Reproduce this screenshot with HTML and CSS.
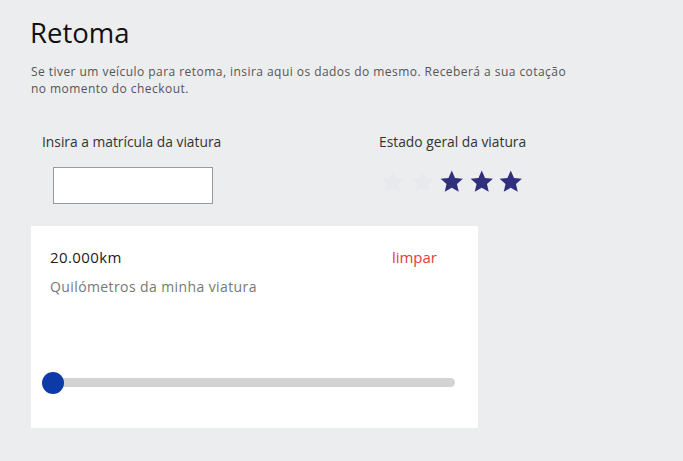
FILE: index.html
```html
<!DOCTYPE html>
<html lang="pt">
<head>
<meta charset="utf-8">
<link rel="stylesheet" href="styles.css">
</head>
<body>
<main class="page">
  <h1 class="title">Retoma</h1>
  <p class="desc">Se tiver um veículo para retoma, insira aqui os dados do mesmo. Receberá a sua cotação<br>no momento do checkout.</p>
  <div class="fields">
    <div class="field plate">
      <label class="label">Insira a matrícula da viatura</label>
      <input class="input" type="text">
    </div>
    <div class="field state">
      <span class="label">Estado geral da viatura</span>
      <div class="stars">
        <svg class="star off" viewBox="0 0 24 24"><path d="M12 1.5l3.1 6.9 7.4.7-5.6 5 1.7 7.4L12 17.6l-6.6 3.9 1.7-7.4-5.6-5 7.4-.7z"/></svg>
        <svg class="star off" viewBox="0 0 24 24"><path d="M12 1.5l3.1 6.9 7.4.7-5.6 5 1.7 7.4L12 17.6l-6.6 3.9 1.7-7.4-5.6-5 7.4-.7z"/></svg>
        <svg class="star on" viewBox="0 0 24 24"><path d="M12 1.5l3.1 6.9 7.4.7-5.6 5 1.7 7.4L12 17.6l-6.6 3.9 1.7-7.4-5.6-5 7.4-.7z"/></svg>
        <svg class="star on" viewBox="0 0 24 24"><path d="M12 1.5l3.1 6.9 7.4.7-5.6 5 1.7 7.4L12 17.6l-6.6 3.9 1.7-7.4-5.6-5 7.4-.7z"/></svg>
        <svg class="star on" viewBox="0 0 24 24"><path d="M12 1.5l3.1 6.9 7.4.7-5.6 5 1.7 7.4L12 17.6l-6.6 3.9 1.7-7.4-5.6-5 7.4-.7z"/></svg>
      </div>
    </div>
  </div>
  <section class="card">
    <div class="card-head">
      <span class="km">20.000km</span>
      <a class="clear">limpar</a>
    </div>
    <div class="sub">Quilómetros da minha viatura</div>
    <div class="slider">
      <div class="track"></div>
      <div class="thumb"></div>
    </div>
  </section>
</main>
</body>
</html>
```
FILE: styles.css
```css
* { box-sizing: border-box; }
html, body { margin: 0; padding: 0; }
body {
  background: #ecedef;
  font-family: "Open Sans", "Liberation Sans", sans-serif;
  color: #222;
  width: 683px;
  height: 461px;
  overflow: hidden;
}
.page { padding: 16px 0 0 30px; }
.title {
  margin: 0;
  font-size: 27.5px;
  font-weight: 400;
  line-height: 34px;
  color: #111;
}
.desc {
  margin: 14px 0 0 1px;
  font-size: 12px;
  line-height: 16.5px;
  letter-spacing: 0.45px;
  color: #555;
}
.fields {
  display: flex;
  margin-top: 36px;
}
.field { display: flex; flex-direction: column; }
.plate { width: 349px; padding-left: 12px; }
.label {
  font-size: 13.8px;
  line-height: 18px;
  color: #333;
}
.input {
  margin: 16px 0 0 11px;
  width: 160px;
  height: 37px;
  border: 1px solid #999;
  background: #fff;
  padding: 0 8px;
}
.stars {
  display: flex;
  gap: 4px;
  margin: 18px 0 0 1px;
}
.star { width: 25.5px; height: 25.5px; display: block; }
.star.off { fill: #e6eaef; }
.star.on { fill: #2f2f7e; }
.card {
  margin: 22px 0 0 1px;
  width: 447px;
  height: 202px;
  background: #fff;
  padding: 21px 41px 0 19px;
}
.card-head {
  display: flex;
  justify-content: space-between;
  align-items: center;
  font-size: 15px;
  line-height: 20px;
  letter-spacing: 0.4px;
}
.km { color: #222; }
.clear { color: #e33b3b; cursor: pointer; letter-spacing: 0; }
.sub {
  margin-top: 11px;
  font-size: 14px;
  line-height: 18px;
  letter-spacing: 0.4px;
  color: #777;
}
.slider {
  position: relative;
  margin: 82px 0 0 3px;
  height: 9px;
  width: 402px;
}
.track {
  height: 9px;
  border-radius: 5px;
  background: #d3d3d3;
}
.thumb {
  position: absolute;
  left: -11px;
  top: -6px;
  width: 22px;
  height: 22px;
  border-radius: 50%;
  background: #0d3aa9;
}
```
